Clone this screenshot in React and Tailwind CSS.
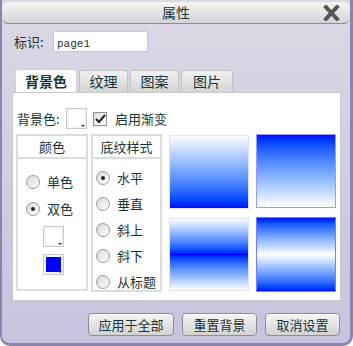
import React from "react";

const font = { fontFamily: '"Noto Sans CJK SC", "Noto Sans", sans-serif' };

const Radio = ({ checked }) => (
  <span className="relative inline-flex w-[14px] h-[14px] shrink-0 items-center justify-center rounded-full border border-[#9a9a9a] bg-gradient-to-br from-[#d8d8d8] to-white">
    {checked && <span className="w-[4px] h-[4px] rounded-full bg-[#1a2a2a]" />}
  </span>
);

const Swatch = ({ color }) => (
  <div className="relative w-[21px] h-[21px] border border-[#c8c8c8] bg-[#f4f4f4] p-[2px]">
    <div className={`w-full h-full ${color}`} />
    <span className="absolute right-[1px] bottom-[1px] w-0 h-0 border-x-[2px] border-t-[2px] border-x-transparent border-t-[#333]" />
  </div>
);

const Tab = ({ label, active, w }) => (
  <div
    className={`${w} flex items-center justify-center border border-b-0 rounded-t-[3px] text-[14px] ${
      active
        ? "h-[23px] bg-white border-[#cfd2d2] font-bold"
        : "h-[22px] bg-gradient-to-b from-[#f2f2f2] to-[#d4d4d4] border-[#c2c4c4]"
    }`}
  >
    {label}
  </div>
);

const Btn = ({ label, w }) => (
  <button className={`${w} h-[23px] rounded-[4px] border border-[#8e8e8e] bg-gradient-to-b from-[#f6f6f6] to-[#d2d2d2] text-[13px] text-[#173535] shadow-[inset_0_1px_0_#fff]`}>
    {label}
  </button>
);

export default function App() {
  const styles = ["水平", "垂直", "斜上", "斜下", "从标题"];
  return (
    <div className="w-[353px] h-[346px] bg-white text-[#173535]" style={font}>
      <div className="w-full h-full flex flex-col rounded-b-[10px] border-l-2 border-r-[3px] border-b-[3px] border-[#8b85ae] bg-gradient-to-b from-[#dcd8e4] to-[#c8c3de]">
        {/* title bar */}
        <div className="mt-[2px] h-[22px] relative flex items-center justify-center rounded-[6px] border-b border-[#8a8a9a] bg-gradient-to-b from-[#f6f6f6] to-[#d4d4d8] text-[14px]">
          属性
          <svg className="absolute right-[10px] top-[3px]" width="17" height="16" viewBox="0 0 17 16">
            <path d="M3 2 L14 14 M14 2 L3 14" stroke="#555" strokeWidth="4" strokeLinecap="square" />
          </svg>
        </div>

        {/* id row */}
        <div className="mt-[7px] h-[21px] flex items-center pl-[12px] text-[13px]">
          <span className="w-[39px]">标识:</span>
          <div className="w-[95px] h-[21px] border border-[#c8c8c8] bg-white flex items-end pl-[3px] pb-[1px]">
            <span className="text-[11px] leading-none" style={{ fontFamily: '"Liberation Mono", monospace' }}>page1</span>
          </div>
        </div>

        {/* tabs */}
        <div className="mt-[17px] ml-[13px] h-[23px] flex items-end gap-[2px]">
          <Tab label="背景色" active w="w-[62px]" />
          <Tab label="纹理" w="w-[49px]" />
          <Tab label="图案" w="w-[49px]" />
          <Tab label="图片" w="w-[52px]" />
        </div>

        {/* panel */}
        <div className="mx-[10px] w-[329px] h-[209px] bg-white border border-[#c6caca] flex flex-col text-[13px]">
          <div className="mt-[15px] h-[21px] flex items-center">
            <span className="ml-[4px] w-[49px]">背景色:</span>
            <Swatch color="bg-white" />
            <span className="ml-[6px] w-[14px] h-[14px] border border-[#8e8e8e] bg-gradient-to-br from-[#dcdcdc] to-white flex items-center justify-center">
              <svg width="11" height="10" viewBox="0 0 11 10">
                <path d="M1 5 L4 8 L10 1" stroke="#1a2a2a" strokeWidth="2" fill="none" />
              </svg>
            </span>
            <span className="ml-[8px]">启用渐变</span>
          </div>

          <div className="mt-[5px] flex">
            {/* color column */}
            <div className="ml-[3px] w-[72px] h-[157px] border-2 border-[#dcdcdc] flex flex-col">
              <div className="h-[23px] border-b-2 border-[#dcdcdc] flex items-center justify-center">颜色</div>
              <div className="flex flex-col items-start pl-[8px]">
                <div className="mt-[15px] h-[16px] flex items-center gap-[7px]"><Radio />单色</div>
                <div className="mt-[11px] h-[16px] flex items-center gap-[7px]"><Radio checked />双色</div>
              </div>
              <div className="mt-[9px] ml-[25px] flex flex-col gap-[7px]">
                <Swatch color="bg-white" />
                <Swatch color="bg-[#0000ff]" />
              </div>
            </div>

            {/* style column */}
            <div className="ml-[3px] w-[71px] h-[158px] border-2 border-[#dcdcdc] flex flex-col">
              <div className="h-[23px] border-b-2 border-[#dcdcdc] flex items-center justify-center">底纹样式</div>
              <div className="mt-[11px] pl-[3px] flex flex-col gap-[10px]">
                {styles.map((s, i) => (
                  <div key={s} className="h-[16px] flex items-center gap-[7px]">
                    <Radio checked={i === 0} />
                    {s}
                  </div>
                ))}
              </div>
            </div>

            {/* previews */}
            <div className="ml-[7px] grid grid-cols-[80px_80px] gap-x-[7px] gap-y-[8px]">
              <div className="h-[74px] mt-[1px] border border-[#e2e2ff] bg-gradient-to-b from-white to-[#0000ff]" />
              <div className="h-[74px] border border-[#9a9aff] bg-gradient-to-b from-[#0000ff] to-white" />
              <div className="h-[73px] border border-[#e2e2ff] bg-gradient-to-b from-white via-[#0000ff] to-white" />
              <div className="h-[75px] -mt-[1px] border border-[#7a7aff] bg-gradient-to-b from-[#0000ff] via-white to-[#0000ff]" />
            </div>
          </div>
        </div>

        {/* buttons */}
        <div className="mt-[12px] pr-[10px] flex justify-end gap-[8px]">
          <Btn label="应用于全部" w="w-[86px]" />
          <Btn label="重置背景" w="w-[75px]" />
          <Btn label="取消设置" w="w-[75px]" />
        </div>
      </div>
    </div>
  );
}
